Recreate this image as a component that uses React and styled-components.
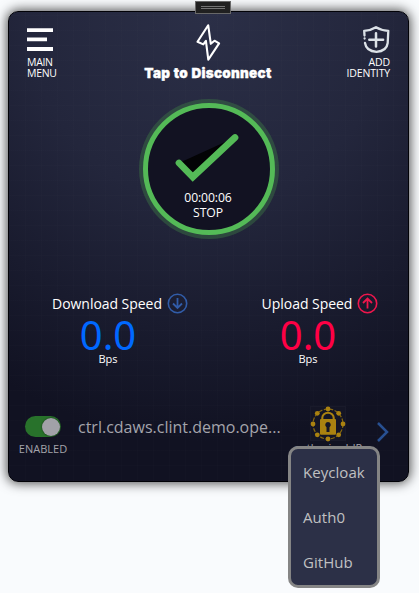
import React from "react";
import styled, { createGlobalStyle } from "styled-components";

const GlobalStyle = createGlobalStyle`
  * { box-sizing: border-box; }
  body { margin: 0; background: #f9fbfd; font-family: "Open Sans", "Noto Sans", sans-serif; }
`;

const Stage = styled.main`
  position: relative;
  width: 419px;
  height: 593px;
  padding: 11px 0 0 8px;
  overflow: hidden;
  background: #f9fbfd;
`;

const Card = styled.section`
  display: flex;
  flex-direction: column;
  width: 401px;
  height: 471px;
  border: 1px solid #020207;
  border-radius: 10px;
  color: #fff;
  background:
    repeating-linear-gradient(90deg, rgba(255,255,255,.006) 0 1px, transparent 1px 16px),
    repeating-linear-gradient(0deg, rgba(255,255,255,.006) 0 1px, transparent 1px 15px),
    radial-gradient(ellipse 400px 430px at 50% 0%, #2b2f47 0%, #23263c 45%, #191b2e 75%, #111222 100%);
  box-shadow: 0 0 12px 1px rgba(0,0,0,.72);
`;

const Header = styled.header`
  display: grid;
  grid-template-columns: 100px 1fr 100px;
  height: 86px;
  padding: 0 18px;
`;

const Action = styled.button`
  display: flex;
  flex-direction: column;
  align-items: ${p => p.$end ? "flex-end" : "flex-start"};
  padding: 14px 0 0;
  border: 0;
  background: none;
  color: #fff;
  font: 500 10.5px/11px "Open Sans", sans-serif;
  letter-spacing: ${p => p.$end ? "-.15px" : "-.3px"};
  text-align: ${p => p.$end ? "right" : "left"};
  svg { display: block; margin-bottom: 2px; }
`;

const Brand = styled.div`
  display: flex;
  flex-direction: column;
  align-items: center;
  padding-top: 10px;
`;

const Title = styled.h1`
  margin: 0 1px 0 0;
  font: 900 13.5px/18px Inter, sans-serif;
  letter-spacing: .26px;
  word-spacing: .6px;
  white-space: nowrap;
  -webkit-text-stroke: .35px #fff;
`;

const StopButton = styled.button`
  display: flex;
  flex-direction: column;
  align-items: center;
  align-self: center;
  flex: none;
  width: 132px;
  height: 132px;
  margin: 5px 0 0;
  padding: 24px 1px 0 0;
  border: 5px solid #54ba57;
  border-radius: 50%;
  background: #121222;
  box-shadow: 0 0 0 4px rgba(62,125,70,.42);
  color: #fff;
  font: 500 12.2px/15px "Open Sans", sans-serif;
  letter-spacing: -.1px;
  svg { display: block; flex: none; margin: 0 0 6px -2px; }
`;

const Speeds = styled.div`
  display: grid;
  grid-template-columns: 200px 200px;
  margin-top: 56px;
  margin-left: -1px;
`;

const Meter = styled.div`
  display: flex;
  flex-direction: column;
  align-items: center;
`;

const MeterHead = styled.div`
  display: flex;
  align-items: center;
  gap: 5px;
  height: 24px;
  padding-left: 24px;
  font-size: 14px;
  font-weight: 500;
  letter-spacing: -.04px;
  white-space: nowrap;
`;

const Value = styled.div`
  height: 36px;
  font: 400 40px/39px "Noto Sans", sans-serif;
  color: ${p => p.$color};
`;

const Unit = styled.div`
  font-size: 11px;
  font-weight: 500;
  line-height: 15px;
`;

const ServiceRow = styled.div`
  display: grid;
  grid-template-columns: 68px 218px 66px 1fr;
  align-items: start;
  margin-top: 39px;
  color: #a4a4ab;
`;

const ToggleCell = styled.div`
  display: flex;
  flex-direction: column;
  align-items: center;
  padding-top: 11px;
  font-size: 11px;
  line-height: 15px;
`;

const Switch = styled.div`
  display: flex;
  justify-content: flex-end;
  align-items: center;
  width: 36px;
  height: 21px;
  margin: 0 0 4px;
  padding: 1px;
  border-radius: 11px;
  background: #28722b;
`;

const Knob = styled.span`
  width: 18px;
  height: 18px;
  border-radius: 50%;
  background: #a1a1a8;
  box-shadow: 0 0 2px rgba(0,0,0,.6);
`;

const Service = styled.div`
  padding: 10px 0 0 1px;
  font-size: 16px;
  line-height: 24px;
  white-space: nowrap;
`;

const Provider = styled.div`
  display: flex;
  flex-direction: column;
  align-items: center;
  padding-top: 1px;
  font-size: 11px;
  line-height: 11px;
  white-space: nowrap;
`;

const Chevron = styled.div`
  padding: 16px 0 0 15px;
  svg { display: block; }
`;

const Grip = styled.div`
  position: absolute;
  left: 195px;
  top: 1px;
  display: flex;
  flex-direction: column;
  align-items: center;
  gap: 1px;
  width: 36px;
  height: 13px;
  padding-top: 4px;
  border: 1px solid #686868;
  background: #202020;
`;

const GripLine = styled.span`
  width: 24px;
  height: 1px;
  background: #747474;
`;

const Menu = styled.ul`
  position: absolute;
  left: 288px;
  top: 446px;
  display: flex;
  flex-direction: column;
  width: 92px;
  height: 142px;
  margin: 0;
  padding: 1px 0;
  border: 3px solid #858585;
  border-radius: 10px;
  background: #2c3047;
  list-style: none;
`;

const MenuItem = styled.li`
  display: flex;
  align-items: center;
  height: 45.8px;
  padding-left: 12px;
  color: #c0c0c2;
  font-size: 15px;
  letter-spacing: .05px;
`;

function MenuIcon() {
  return <svg width="27" height="29" viewBox="0 0 27 29" fill="none" stroke="#fff" strokeWidth="3.8"><path d="M0 4.1H26M0 13.4H20M0 23H26" /></svg>;
}

function ShieldIcon() {
  return (
    <svg width="28" height="29" viewBox="0 0 28 29" fill="none" stroke="#dce2e8" strokeLinecap="round" strokeLinejoin="round">
      <path strokeWidth="2.3" d="M2.5 9.5 2.2 4.8Q9 4.3 14 1.2 19 4.3 26.3 4.8L25.7 17Q24.7 25.2 14.5 25.8 4.2 25.2 3 17M2.6 12.5v.1" />
      <path strokeWidth="2.5" d="M14 7.2v13.4M7.3 13.8h13.8" />
    </svg>
  );
}

function Logo() {
  return <svg width="27" height="42" viewBox="0 0 27 42" fill="none" stroke="#fff" strokeWidth="2.1" strokeLinejoin="round"><path d="M13.2 3.2 2.5 19.8l5.8 2.6 2.6-3.5 2.4 18.8L24.1 21.3l-4.6-2.6-3.7 3.1Z" /></svg>;
}

function CheckIcon() {
  return <svg width="66" height="52" viewBox="0 0 66 52" fill="#030305" stroke="#54ba57" strokeWidth="6.7" strokeLinecap="round"><path d="M5 31 18.8 45 61 5.5" /></svg>;
}

function ArrowIcon({ up, color }) {
  return (
    <svg width="21" height="21" viewBox="0 0 21 21" fill="none" stroke={color} strokeWidth="1.6">
      <circle cx="10.5" cy="10.5" r="9.2" />
      <path strokeWidth="1.8" d={up ? "M10.5 15.5V5.5M6 10l4.5-4.5L15 10" : "M10.5 5v10M6 10.5l4.5 4.5 4.5-4.5"} />
    </svg>
  );
}

function LockIcon() {
  const dots = [[18, 3], [28.7, 7.3], [33, 18], [28.7, 28.8], [18, 33], [7.3, 28.8], [3, 18], [7.3, 7.3]];
  return (
    <svg width="36" height="36" viewBox="0 0 36 36" fill="#aa8210">
      <rect x=".5" y=".5" width="35" height="34" fill="#141525" stroke="#191a2a" />
      <circle cx="18" cy="18" r="15" fill="none" stroke="#86680f" strokeWidth="1.2" strokeDasharray="4 1.5" />
      {dots.map(([x, y]) => <circle key={`${x}-${y}`} cx={x} cy={y} r="2.4" />)}
      <path d="M12.3 14v-2.2a5.7 5.1 0 0 1 11.4 0V14" fill="none" stroke="#aa8210" strokeWidth="2.1" />
      <rect x="10" y="13" width="16" height="15.7" rx="1" />
      <path d="M18 16a2.9 2.9 0 0 0-1.5 5.3V26h3v-4.7A2.9 2.9 0 0 0 18 16Z" fill="#151626" />
    </svg>
  );
}

export default function App() {
  return (
    <Stage>
      <GlobalStyle />
      <Card>
        <Header>
          <Action><MenuIcon />MAIN<br />MENU</Action>
          <Brand><Logo /><Title>Tap to Disconnect</Title></Brand>
          <Action $end><ShieldIcon />ADD<br />IDENTITY</Action>
        </Header>
        <StopButton><CheckIcon /><span>00:00:06</span><span>STOP</span></StopButton>
        <Speeds>
          <Meter>
            <MeterHead>Download Speed<ArrowIcon color="#315ca8" /></MeterHead>
            <Value $color="#0068ff">0.0</Value>
            <Unit>Bps</Unit>
          </Meter>
          <Meter>
            <MeterHead>Upload Speed<ArrowIcon up color="#ed164c" /></MeterHead>
            <Value $color="#ff0045">0.0</Value>
            <Unit>Bps</Unit>
          </Meter>
        </Speeds>
        <ServiceRow>
          <ToggleCell><Switch><Knob /></Switch>ENABLED</ToggleCell>
          <Service>ctrl.cdaws.clint.demo.ope...</Service>
          <Provider><LockIcon />authorize IdP</Provider>
          <Chevron><svg width="15" height="22" viewBox="0 0 15 22" fill="none" stroke="#285091" strokeWidth="2.5"><path d="m2 2 9 9-9 9" /></svg></Chevron>
        </ServiceRow>
      </Card>
      <Grip><GripLine /><GripLine /></Grip>
      <Menu><MenuItem>Keycloak</MenuItem><MenuItem>Auth0</MenuItem><MenuItem>GitHub</MenuItem></Menu>
    </Stage>
  );
}
